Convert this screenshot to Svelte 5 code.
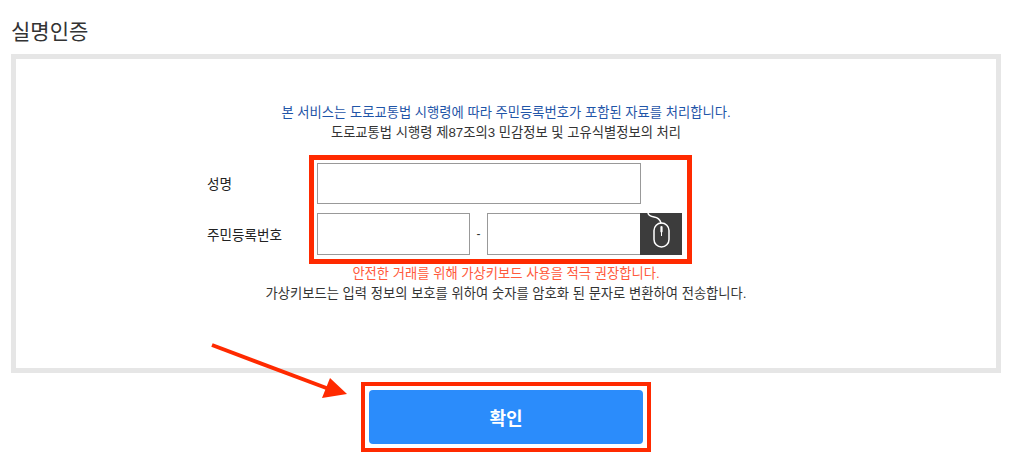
<script>
  // Name check form, with the red annotation boxes and arrow from the capture.
  let name = $state('');
  let idFront = $state('');
  let idBack = $state('');
</script>

<div class="page">
  <h2 class="title">실명인증</h2>

  <section class="panel">
    <p class="notice blue">본 서비스는 도로교통법 시행령에 따라 주민등록번호가 포함된 자료를 처리합니다.</p>
    <p class="notice law">도로교통법 시행령 제87조의3 민감정보 및 고유식별정보의 처리</p>

    <div class="form">
      <div class="labels">
        <label for="name">성명</label>
        <label for="id-front">주민등록번호</label>
      </div>
      <div class="mark fields">
        <input id="name" class="name" bind:value={name} />
        <div class="id-row">
          <input id="id-front" class="id-front" bind:value={idFront} />
          <span class="dash">-</span>
          <input class="id-back" bind:value={idBack} aria-label="주민등록번호 뒷자리" />
          <button class="mouse" type="button" aria-label="가상키보드">
            <svg width="42" height="42" viewBox="0 0 42 42" fill="none" stroke="#fff" stroke-width="1.500">
              <path d="M8 0c.5 3 2.500 3.500 6 4c3.500.5 6 2.500 7 6" stroke-linecap="round" />
              <rect x="14" y="10" width="15" height="24" rx="7.500" />
              <path d="M21.500 14v4.500" stroke-width="2.200" stroke-linecap="round" />
              <path d="M21.500 18v5" stroke-width="1" />
            </svg>
          </button>
        </div>
      </div>
    </div>

    <p class="notice red">안전한 거래를 위해 가상키보드 사용을 적극 권장합니다.</p>
    <p class="notice law">가상키보드는 입력 정보의 보호를 위하여 숫자를 암호화 된 문자로 변환하여 전송합니다.</p>
  </section>

  <div class="actions">
    <div class="mark confirm-mark">
      <button class="confirm" type="button">확인</button>
    </div>
  </div>

  <svg class="arrow" width="160" height="70" viewBox="0 0 160 70" aria-hidden="true">
    <path d="M1 2L118 46" stroke="#ff2a00" stroke-width="4" />
    <path d="M119 35L136 51L111 55Z" fill="#ff2a00" />
  </svg>
</div>

<style>
  :global(body) {
    margin: 0;
    background: #fff;
  }

  .page {
    position: relative;
    width: 1024px;
    height: 460px;
    box-sizing: border-box;
    padding: 20px 23px 0 11px;
    overflow: hidden;
    font-family: "Liberation Sans", "Noto Sans CJK KR", sans-serif;
    color: #222;
  }

  .title {
    margin: 0 0 10px;
    font-size: 21px;
    line-height: 24px;
    font-weight: 400;
    color: #333;
  }

  .panel {
    box-sizing: border-box;
    height: 319px;
    border: 5px solid #e6e6e6;
    padding: 44px 0 0;
  }

  .notice {
    margin: 0;
    font-size: 13.300px;
    line-height: 20px;
    text-align: center;
  }

  .blue {
    color: #1f55a8;
  }

  .law {
    color: #333;
  }

  .red {
    color: #ff5a3c;
  }

  .form {
    display: flex;
    margin: 12px 0 0 191px;
  }

  .labels {
    display: flex;
    flex-direction: column;
    width: 102px;
    padding-top: 22px;
    gap: 35px;
    font-size: 13.600px;
    line-height: 16px;
  }

  .labels label {
    display: block;
  }

  .mark {
    box-sizing: border-box;
    border: 5px solid #ff2a00;
  }

  .fields {
    width: 383px;
    height: 109px;
    padding: 3px;
  }

  input {
    box-sizing: border-box;
    display: block;
    margin: 0;
    padding: 0 6px;
    border: 1px solid #999;
    border-radius: 0;
    background: #fff;
    outline: none;
  }

  .name {
    width: 324px;
    height: 41px;
  }

  .id-row {
    display: flex;
    align-items: stretch;
    height: 42px;
    margin-top: 9px;
  }

  .id-front {
    width: 153px;
  }

  .dash {
    width: 17px;
    text-align: center;
    font-size: 12px;
    line-height: 42px;
    color: #333;
  }

  .id-back {
    width: 153px;
    border-right: 0;
  }

  .mouse {
    width: 42px;
    height: 42px;
    padding: 0;
    border: 0;
    background: #3c3c3c;
    line-height: 0;
  }

  .actions {
    margin: 9px 0 0 350px;
  }

  .confirm-mark {
    width: 290px;
    height: 70px;
    border-width: 4px;
    padding: 4px;
  }

  .confirm {
    display: block;
    width: 100%;
    height: 100%;
    border: 0;
    border-radius: 4px;
    background: #2b8cfb;
    color: #fff;
    font-family: inherit;
    font-size: 18px;
    font-weight: 700;
  }

  .arrow {
    position: absolute;
    left: 211px;
    top: 343px;
  }
</style>
